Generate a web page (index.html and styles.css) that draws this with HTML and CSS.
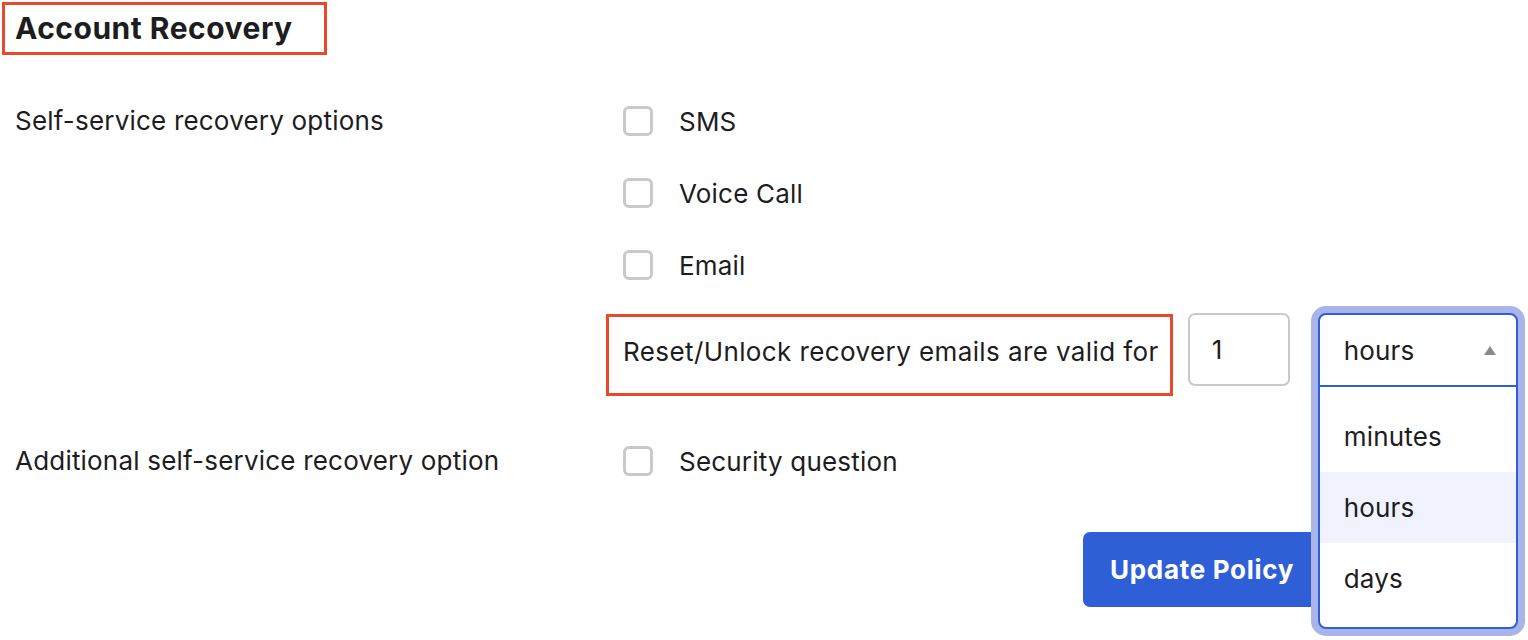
FILE: index.html
```html
<!DOCTYPE html>
<html lang="en">
<head>
<meta charset="utf-8">
<title>Account Recovery</title>
<link rel="stylesheet" href="styles.css">
</head>
<body>
<div class="page">
  <h2 class="title">Account Recovery</h2>

  <div class="row row-first">
    <div class="label">Self-service recovery options</div>
    <div class="options">
      <label class="opt"><span class="cb"></span><span>SMS</span></label>
      <label class="opt"><span class="cb"></span><span>Voice Call</span></label>
      <label class="opt"><span class="cb"></span><span>Email</span></label>
      <div class="reset">
        <span class="reset-label">Reset/Unlock recovery emails are valid for</span>
        <div class="num">1</div>
        <div class="select">
          <div class="select-panel">
            <div class="select-value"><span>hours</span><span class="tri"></span></div>
            <ul class="list">
              <li>minutes</li>
              <li class="active">hours</li>
              <li>days</li>
            </ul>
          </div>
        </div>
      </div>
    </div>
  </div>

  <div class="row">
    <div class="label">Additional self-service recovery option</div>
    <div class="options">
      <label class="opt"><span class="cb"></span><span>Security question</span></label>
    </div>
  </div>

  <div class="actions">
    <button class="btn">Update Policy</button>
  </div>
</div>
</body>
</html>
```

FILE: styles.css
```css
* { box-sizing: border-box; }
html, body { margin: 0; padding: 0; background: #fff; }
body {
  font-family: Inter, "Noto Sans", "Liberation Sans", sans-serif;
  color: #1d1d21;
  font-size: 26px;
  letter-spacing: 0.2px;
}
.page { padding: 2px 0 40px 2px; min-height: 660px; }
.title {
  display: inline-block;
  margin: 0;
  border: 3px solid #e8482b;
  padding: 0 31px 0 10px;
  height: 53px;
  line-height: 47px;
  font-size: 30px;
  font-weight: 700;
  letter-spacing: 0.5px;
}
.row { display: flex; margin-left: -2px; }
.row-first { margin-top: 30px; }
.label {
  width: 623px;
  padding-left: 15px;
  line-height: 72px;
  flex-shrink: 0;
}
.options { display: flex; flex-direction: column; }
.opt {
  height: 72px;
  display: flex;
  align-items: center;
  gap: 26px;
}
.cb {
  width: 30px;
  height: 30px;
  border: 3px solid #c8c8cd;
  border-radius: 6px;
  background: #fff;
  flex-shrink: 0;
}
.reset {
  display: flex;
  align-items: flex-start;
  margin-top: 12px;
  height: 112px;
}
.reset-label {
  margin-left: -17px;
  margin-top: 1px;
  height: 82px;
  border: 3px solid #e8482b;
  padding: 0 11px 8px 14px;
  display: flex;
  align-items: center;
  white-space: nowrap;
  letter-spacing: 0.4px;
}
.num {
  margin-left: 15px;
  width: 102px;
  height: 73px;
  border: 2px solid #c8c8cd;
  border-radius: 7px;
  padding-left: 22px;
  display: flex;
  align-items: center;
}
.select {
  position: relative;
  margin-left: 28px;
  width: 200px;
  height: 74px;
}
.select-panel {
  position: absolute;
  top: 0;
  left: 0;
  right: 0;
  z-index: 5;
  background: #fff;
  border: 2px solid #2f5fd6;
  border-radius: 8px;
  box-shadow: 0 0 0 7px #a9b5e8;
}
.select-value {
  height: 72px;
  border-bottom: 2px solid #2f5fd6;
  display: flex;
  align-items: center;
  justify-content: space-between;
  padding: 0 20px 0 24px;
}
.tri {
  width: 0;
  height: 0;
  border-left: 6px solid transparent;
  border-right: 6px solid transparent;
  border-bottom: 9px solid #8a8a8a;
}
.list {
  list-style: none;
  margin: 0;
  padding: 14px 0 13px;
}
.list li {
  height: 71px;
  display: flex;
  align-items: center;
  padding-left: 24px;
}
.list li.active { background: #f0f3fd; }
.actions {
  width: 1320px;
  display: flex;
  justify-content: flex-end;
  margin-top: 35px;
  margin-left: -2px;
}
.btn {
  font-family: inherit;
  height: 75px;
  width: 237px;
  border: none;
  border-radius: 7px;
  background: #2f5fd6;
  color: #fff;
  font-size: 26px;
  font-weight: 700;
  letter-spacing: 0.7px;
  padding: 0 0 0 27px;
  text-align: left;
}
```
